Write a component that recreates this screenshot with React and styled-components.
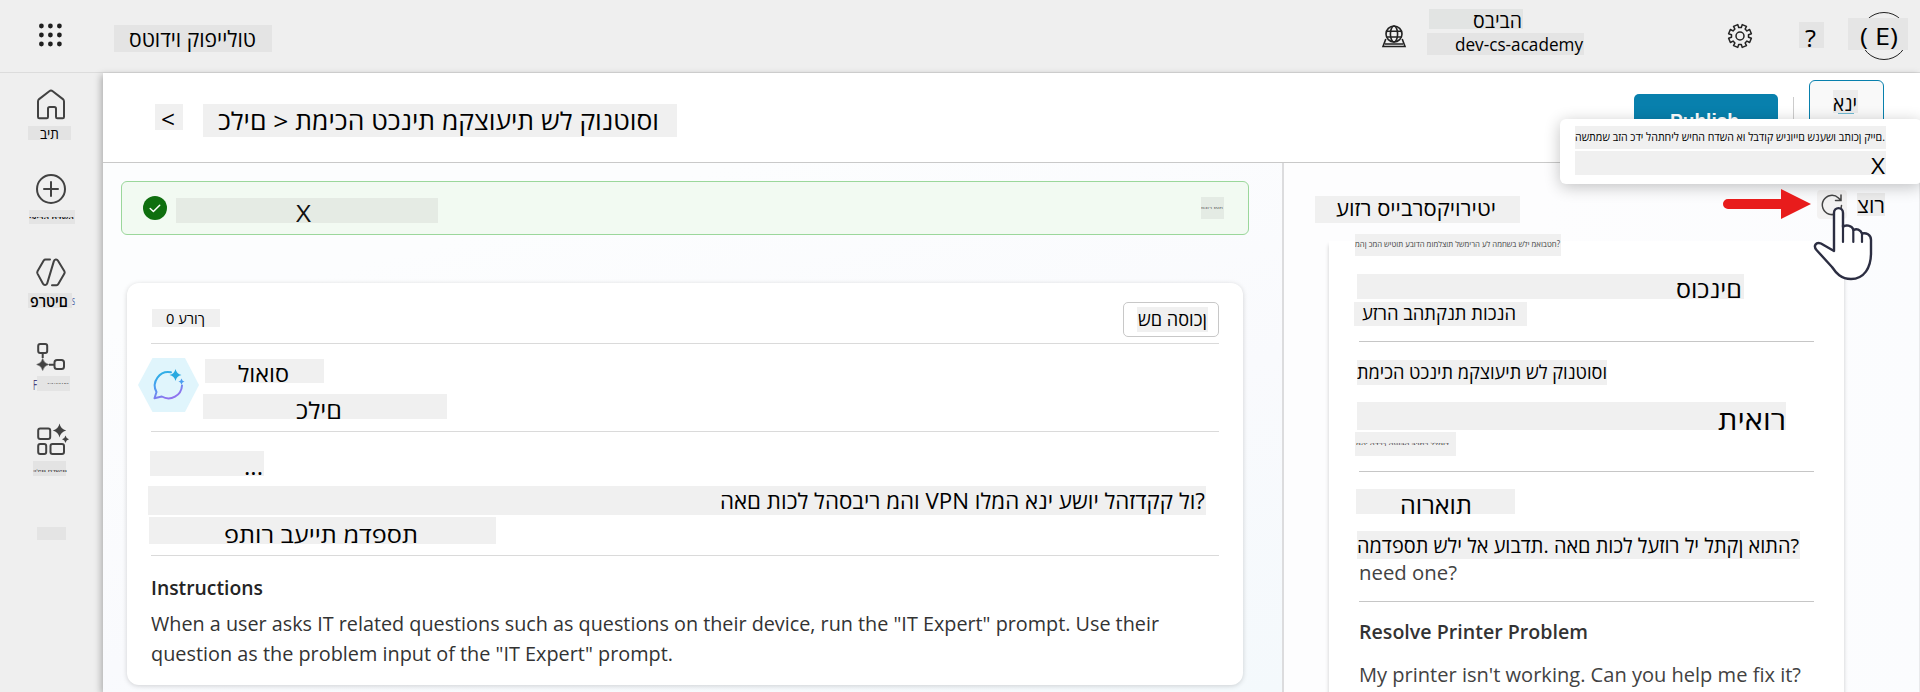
import React, { useLayoutEffect, useRef, useState } from "react";
import styled, { createGlobalStyle } from "styled-components";

const Global = createGlobalStyle`
  * { box-sizing: border-box; }
  body { margin: 0; overflow: hidden; background: #fff; font-family: "Open Sans", "Noto Sans", "Liberation Sans", sans-serif; color: #000; }
`;

/* ---------- text ---------- */
const FitText = styled.span`
  display: block;
  flex: none;
  white-space: pre;
  direction: ltr;
  unicode-bidi: bidi-override;
  transform-origin: 0 88.8%;
  font-size: ${(p) => p.$size}px;
  font-weight: ${(p) => p.$weight || 400};
  line-height: 1;
  color: ${(p) => p.$color || "#000"};
`;

/* Text stretched horizontally to a given width. */
function Fit({ width, size, weight, color, flat = 1, children }) {
  const ref = useRef(null);
  const [k, setK] = useState(1);
  useLayoutEffect(() => {
    const measure = () => ref.current && setK(width / ref.current.getBoundingClientRect().width * (Number(ref.current.dataset.k) || 1));
    measure();
  }, [width, size, children]);
  return (
    <FitText ref={ref} $size={size} $weight={weight} $color={color} data-k={k} style={{ transform: `scale(${k}, ${flat})` }}>
      {children}
    </FitText>
  );
}

const ChipBox = styled.div`
  flex: none;
  display: flex;
  align-items: flex-start;
  width: ${(p) => p.$w}px;
  height: ${(p) => p.$h}px;
  margin: ${(p) => p.$mt || 0}px 0 0 ${(p) => p.$ml || 0}px;
  background: ${(p) => p.$bg || "#f0f0f0"};
`;
const ChipInner = styled.div`
  flex: none;
  width: max-content;
  margin: ${(p) => p.$top}px 0 0 ${(p) => p.$x}px;
`;

function Chip({ w, h, mt, ml, bg, x = 0, base, tw, size, ...rest }) {
  return (
    <ChipBox $w={w} $h={h} $mt={mt} $ml={ml} $bg={bg}>
      {rest.children && (
        <ChipInner $x={x} $top={base - size * 0.888}>
          <Fit width={tw} size={size} {...rest} />
        </ChipInner>
      )}
    </ChipBox>
  );
}

/* ---------- frame ---------- */
const Page = styled.div`
  position: relative;
  width: 1920px;
  height: 692px;
  overflow: hidden;
  display: flex;
  flex-direction: column;
`;
const TopBar = styled.header`
  flex: none;
  display: flex;
  align-items: flex-start;
  height: 73px;
  background: #efefef;
  border-bottom: 1px solid #dcdcdc;
`;
const Body = styled.div`
  flex: 1;
  display: flex;
  min-height: 0;
`;
const Sidebar = styled.nav`
  flex: none;
  width: 103px;
  background: #efefef;
`;
const NavItem = styled.div`
  height: ${(p) => p.$h}px;
  padding-top: ${(p) => p.$pt}px;
`;
const NavRow = styled.div`
  display: flex;
  align-items: flex-start;
`;
const Main = styled.main`
  flex: 1;
  display: flex;
  flex-direction: column;
  min-width: 0;
  background: #fff;
  box-shadow: -2px 2px 7px rgba(0, 0, 0, 0.28);
`;
const MainHeader = styled.div`
  flex: none;
  display: flex;
  align-items: flex-start;
  height: 90px;
  border-bottom: 1px solid #c9c9c9;
`;
const Panes = styled.div`
  flex: 1;
  display: flex;
  min-height: 0;
`;
const ConfigPane = styled.section`
  flex: none;
  width: 1181px;
  border-right: 2px solid #dcdcde;
  padding: 18px 0 0 18px;
  background: linear-gradient(165deg, #fcfdfe 20%, #f9fafd 60%, #f4f9fc);
`;
const TestPane = styled.section`
  flex: 1;
  border-right: 1px solid #e9eaec;
  background: linear-gradient(90deg, #fdfdfe 40%, #fbfcfe);
`;

/* ---------- top bar ---------- */
const Icon = styled.svg`
  flex: none;
  display: block;
  overflow: visible;
  fill: none;
  margin: ${(p) => p.$mt || 0}px 0 0 ${(p) => p.$ml || 0}px;
`;
const Avatar = styled.div`
  display: flex;
  flex: none;
  width: 48px;
  height: 48px;
  margin: 12px 0 0 36px;
  border: 1.3px solid #222;
  border-radius: 50%;
`;

/* ---------- main header ---------- */
const PublishButton = styled.button`
  flex: none;
  display: flex;
  justify-content: center;
  width: 144px;
  height: 50px;
  margin: 21px 0 0 957px;
  padding: 17px 0 0 2px;
  border: 0;
  border-radius: 5px;
  background: #0880ad;
`;
const VLine = styled.div`
  width: 1px;
  height: 44px;
  margin: 24px 0 0 15px;
  background: #ccc;
`;
const TestButton = styled.div`
  flex: none;
  width: 75px;
  height: 50px;
  margin: 7px 0 0 15px;
  border: 1.5px solid #0880ad;
  border-radius: 6px;
  background: #f9f9f9;
`;
const Underline = styled.div`
  width: 16px;
  height: 1px;
  margin: 0 0 0 28px;
  background: #6fb9d2;
`;

/* ---------- left pane ---------- */
const Banner = styled.div`
  display: flex;
  align-items: flex-start;
  width: 1128px;
  height: 54px;
  border: 1px solid #9bd79b;
  border-radius: 6px;
  background: #f2faf2;
`;
const Card = styled.article`
  width: 1116px;
  height: 402px;
  margin: 48px 0 0 6px;
  border-radius: 12px;
  background: #fff;
  box-shadow: 0 1px 5px rgba(0, 0, 0, 0.17);
`;
const Row = styled.div`
  display: flex;
  align-items: flex-start;
  height: ${(p) => p.$h}px;
`;
const Rule = styled.div`
  width: ${(p) => p.$w}px;
  height: 1px;
  margin: ${(p) => p.$mt || 0}px 0 0 ${(p) => p.$ml}px;
  background: ${(p) => p.$c || "#dadada"};
`;
const SchemaButton = styled.div`
  flex: none;
  width: 96px;
  height: 35px;
  margin: 19px 0 0 903px;
  border: 1px solid #c8c8c8;
  border-radius: 5px;
`;
const Stack = styled.div`
  flex: none;
`;

/* ---------- right pane ---------- */
const TestHeader = styled.div`
  display: flex;
  align-items: flex-start;
  height: 78px;
`;
const RefreshButton = styled.div`
  flex: none;
  width: 30px;
  height: 29px;
  margin: 27px 0 0 297px;
  border-radius: 4px;
  background: #f3f2f2;
`;
const Chat = styled.div`
  display: flow-root;
  width: 515px;
  height: 460px;
  margin-left: 45px;
  background: linear-gradient(#fff, #fff) content-box;
  box-shadow: 0 4px 4px rgba(0, 0, 0, 0.2);
`;
const Pull = styled.div`
  margin-top: -7px;
`;

/* ---------- overlays ---------- */
const Tooltip = styled.div`
  position: absolute;
  left: 1560px;
  top: 119px;
  width: 362px;
  height: 65px;
  border-radius: 6px;
  background: #fff;
  box-shadow: 0 3px 16px rgba(0, 0, 0, 0.24);
`;
const Overlay = styled.svg`
  position: absolute;
  left: ${(p) => p.$x}px;
  top: ${(p) => p.$y}px;
`;

const INK = "#424242";

const gearPath = (() => {
  const pts = [];
  const n = 8;
  for (let i = 0; i < n; i++) {
    const a = (i * 2 * Math.PI) / n - Math.PI / 2 + Math.PI / 8;
    [
      [-0.24, 8.6],
      [-0.2, 11.6],
      [0.2, 11.6],
      [0.24, 8.6],
    ].forEach(([d, r]) => pts.push(`${(12 + r * Math.cos(a + d)).toFixed(2)} ${(12 + r * Math.sin(a + d)).toFixed(2)}`));
  }
  return `M${pts.join("L")}Z`;
})();

function Header() {
  return (
    <TopBar>
      <Icon width="24" height="24" $mt={23} $ml={38} viewBox="0 0 24 24">
        {[3, 12, 21].map((y) => [3, 12, 21].map((x) => <circle key={`${x}-${y}`} cx={x + 0.4} cy={y} r="2.4" fill="#202020" />))}
      </Icon>
      <Chip w={158} h={27} mt={25} ml={52} bg="#e4e4e4" x={15} base={22} tw={127} size={22} weight={480}>סטודיו קופיילוט</Chip>
      <Icon width="24" height="23" $mt={25} $ml={1110} viewBox="0 0 24 23" stroke="#222" strokeWidth="1.6">
        <circle cx="12" cy="9" r="8" />
        <ellipse cx="12" cy="9" rx="3.6" ry="8" />
        <path d="M4.500 6.200h15M4.500 12h15M3.800 14L1 21.500h22L20.200 14M3 19h18" />
      </Icon>
      <Stack>
        <Chip w={94} h={20} mt={9} ml={23} bg="#e2e4e3" x={44} base={20} tw={49} size={20} weight={480}>סביבה</Chip>
        <Chip w={157} h={22} mt={4} ml={21} bg="#e4e4e4" x={28} base={19} tw={128} size={19}>dev-cs-academy</Chip>
      </Stack>
      <Icon width="24" height="24" $mt={24} $ml={144} viewBox="0 0 24 24" stroke="#222" strokeWidth="1.5" strokeLinejoin="round">
        <path d={gearPath} />
        <circle cx="12" cy="12" r="4" />
      </Icon>
      <Chip w={25} h={26} mt={22} ml={47} bg="#e4e4e4" x={6} base={25} tw={11} size={23}>?</Chip>
      <Avatar>
        <Chip w={60} h={32} mt={5} ml={-13} bg="#e5e5e5" x={12} base={27} tw={38} size={23} weight={500}>( E)</Chip>
      </Avatar>
    </TopBar>
  );
}

function Nav() {
  return (
    <Sidebar>
      <NavItem $h={84} $pt={16}>
        <Icon width="30" height="31" $ml={36} viewBox="0 0 30 31" stroke={INK} strokeWidth="2" strokeLinejoin="round">
          <path d="M2 12.500c0-1 .4-1.800 1.100-2.400L13.300 2.200c1-.8 2.400-.8 3.400 0l10.200 7.900c.7.6 1.100 1.400 1.100 2.400V28c0 .8-.5 1.300-1.300 1.300h-5.400c-.8 0-1.300-.5-1.300-1.300v-8.200c0-1-.7-1.700-1.700-1.700h-4.600c-1 0-1.700.7-1.700 1.700V28c0 .8-.5 1.300-1.300 1.300H3.300C2.500 29.300 2 28.800 2 28z" />
        </Icon>
        <Chip w={43} h={14} mt={6} ml={28} bg="#e3e3e3" x={12} base={13.5} tw={19} size={13.5} weight={480}>בית</Chip>
      </NavItem>
      <NavItem $h={84} $pt={16}>
        <Icon width="30" height="32" $ml={36} viewBox="0 0 30 32" stroke={INK} strokeWidth="2" strokeLinecap="round">
          <circle cx="15" cy="16" r="14" />
          <path d="M15 9v14M8 16h14" />
        </Icon>
        <Chip w={46} h={14} mt={5} ml={29} bg="#e4e4e4" x={0} base={9} tw={45} size={11} flat={0.25} weight={600}>יצירה חדשה</Chip>
      </NavItem>
      <NavItem $h={85} $pt={17}>
        <Icon width="30" height="29" $ml={36} viewBox="0 0 30 29" stroke={INK} strokeWidth="2" strokeLinejoin="round" strokeLinecap="round">
          <path d="M14 1.500H9.500c-.8 0-1.400.4-1.800 1L1.500 13.200c-.4.8-.4 1.600 0 2.400l5.500 10.200c1 1.800 3.600 1.500 4.200-.4L17.800 3.400C18.500 1.200 21 1 22 2.700l6.400 10.500c.4.8.4 1.600 0 2.400L22.300 26c-.4.800-1 1.200-1.800 1.200H16" />
        </Icon>
        <NavRow>
          <Chip w={44} h={15} mt={6} ml={28} bg="#e3e3e3" x={2} base={14.5} tw={38} size={15.5} weight={550}>פרטים</Chip>
          <Chip w={3} h={15} mt={6} bg="transparent" base={13} tw={3} size={13} color="#3a55a0">s</Chip>
        </NavRow>
      </NavItem>
      <NavItem $h={82} $pt={16}>
        <Icon width="32" height="30" $ml={36} viewBox="0 0 32 30" stroke={INK} strokeWidth="2">
          <rect x="2.200" y="2" width="9" height="9" rx="2" />
          <rect x="18.500" y="18" width="9.500" height="9" rx="2.500" />
          <path d="M6.700 11v5M13 22.700h5" />
          <path d="M6.700 16.500q1.200 5 6 6-4.800 1-6 6-1.200-5-6-6 4.800-1 6-6z" fill={INK} strokeWidth=".5" />
        </Icon>
        <NavRow>
          <Chip w={4} h={15} mt={4} ml={33} bg="transparent" base={14} tw={4} size={15} color="#4a3f7a">F</Chip>
          <Chip w={33} h={15} mt={4} bg="#e4e4e4" x={10} base={8} tw={22} size={9} flat={0.2} color="#555">זרימות</Chip>
        </NavRow>
      </NavItem>
      <NavItem $h={118} $pt={15}>
        <Icon width="34" height="33" $ml={36} viewBox="0 0 34 33" stroke={INK} strokeWidth="2">
          <rect x="2.200" y="5.500" width="12" height="10.500" rx="2" />
          <rect x="2.200" y="21" width="8" height="10" rx="2" />
          <rect x="14.500" y="21" width="13.500" height="10" rx="2" />
          <path d="M23.500.5q1.200 5.700 6.700 7-5.500 1.300-6.700 7-1.200-5.700-6.700-7 5.500-1.300 6.700-7z" fill={INK} stroke="none" />
          <path d="M29.500 12.500q.6 3 3.500 3.700-2.900.7-3.500 3.700-.6-3-3.500-3.700 2.900-.7 3.500-3.700z" fill={INK} stroke="none" />
        </Icon>
        <Chip w={33} h={15} mt={5} ml={33} bg="#e3e3e3" x={0} base={10.500} tw={34} size={11} flat={0.35} color="#222">כלים חדשים</Chip>
      </NavItem>
      <Chip w={29} h={13} ml={37} mt={1} bg="#e4e4e4" />
    </Sidebar>
  );
}

function Config() {
  return (
    <ConfigPane>
      <Banner>
        <Icon width="24" height="24" $mt={14} $ml={21} viewBox="0 0 24 24">
          <circle cx="12" cy="12" r="12" fill="#0f6f0f" />
          <path d="M7.200 12.500l3.200 3 6.300-6.300" stroke="#fff" strokeWidth="1.500" strokeLinecap="round" strokeLinejoin="round" />
        </Icon>
        <Chip w={262} h={25} mt={16} ml={9} bg="#e5ebe4" x={120} base={24.500} tw={15} size={23} color="#111">X</Chip>
        <Chip w={23} h={22} mt={15} ml={763} bg="#e4ebe4" x={0} base={12} tw={22} size={10} flat={0.3} color="#555">סגור זאת</Chip>
      </Banner>
      <Card>
        <Row $h={60}>
          <Chip w={68} h={18} mt={26} ml={25} x={14} base={15} tw={39} size={14}>0 ערוך</Chip>
          <SchemaButton>
            <Chip w={71} h={25} mt={4} ml={13} x={1} base={19} tw={69} size={18} weight={450}>שם הסוכן</Chip>
          </SchemaButton>
        </Row>
        <Rule $w={1068} $ml={24} />
        <Row $h={87}>
          <Icon width="61" height="54" $mt={14} $ml={11} viewBox="0 0 61 54">
            <defs>
              <linearGradient id="bubble" x1="0" y1="0" x2="0.4" y2="1">
                <stop offset="0" stopColor="#27b5e3" />
                <stop offset="0.5" stopColor="#4a9df0" />
                <stop offset="1" stopColor="#8f74ee" />
              </linearGradient>
            </defs>
            <path d="M14.500 0h32.500l14 27-14 27h-32.500L0 27z" fill="#e0f5fc" />
            <path d="M33 14.300A13.500 13.500 0 0 0 18.500 34L16.500 40.200l7.300-1.700A13.500 13.500 0 0 0 44 27.500" stroke="url(#bubble)" strokeWidth="2" strokeLinecap="round" strokeLinejoin="round" />
            <path d="M37.500 11q1.100 4.900 6 6-4.900 1.100-6 6-1.100-4.900-6-6 4.900-1.100 6-6z" fill="#29a9e0" />
            <path d="M43.500 20.500q.6 2.500 3.100 3.100-2.500.6-3.100 3.100-.6-2.500-3.100-3.100 2.500-.6 3.100-3.100z" fill="#4a9df0" />
          </Icon>
          <Stack>
            <Chip w={119} h={24} mt={15} ml={6} x={33} base={22.500} tw={51} size={22} weight={480}>לואוס</Chip>
            <Chip w={244} h={25} mt={11} ml={4} x={93} base={25} tw={46} size={23} weight={480}>כלים</Chip>
          </Stack>
        </Row>
        <Rule $w={1068} $ml={24} />
        <Chip w={114} h={25} mt={19} ml={23} x={94} base={24} tw={19} size={24}>...</Chip>
        <Chip w={1058} h={29} mt={10} ml={21} x={572} base={23} tw={485} size={21.500} weight={450}>האם תוכל להסביר מהו VPN ולמה אני עשוי להזדקק לו?</Chip>
        <Chip w={347} h={27} mt={2} ml={22} x={75} base={25.500} tw={194} size={22} weight={480}>פתור בעיית מדפסת</Chip>
        <Rule $w={1068} $ml={24} $mt={11} />
        <Chip w={300} h={30} mt={20} ml={24} bg="transparent" base={19} tw={112} size={20.500} weight={600} color="#242424">Instructions</Chip>
        <Chip w={1060} h={30} mt={5} ml={24} bg="transparent" base={20} tw={1008} size={20.500} color="#333">When a user asks IT related questions such as questions on their device, run the "IT Expert" prompt. Use their</Chip>
        <Chip w={1060} h={30} ml={24} bg="transparent" base={20.500} tw={522} size={20.500} color="#333">question as the problem input of the "IT Expert" prompt.</Chip>
      </Card>
    </ConfigPane>
  );
}

function Test() {
  return (
    <TestPane>
      <TestHeader>
        <Chip w={205} h={27} mt={33} ml={31} x={21} base={21} tw={160} size={21} weight={480}>עוזר סייברסקיוריטי</Chip>
        <RefreshButton>
          <Icon width="22" height="22" $mt={4} $ml={4} viewBox="0 0 22 22" stroke="#444" strokeWidth="1.500" strokeLinecap="round">
            <path d="M20.500 11.500A9.600 9.600 0 1 1 17.500 4l2 2M20 1v5.500h-5.500" />
          </Icon>
        </RefreshButton>
        <Chip w={28} h={23} mt={30} ml={10} bg="#ededed" x={0} base={21} tw={28} size={21} weight={480}>צור</Chip>
      </TestHeader>
      <Chat>
        <Pull>
          <Chip w={206} h={22} ml={26} x={0} base={14} tw={205} size={13} flat={0.62} color="#444">מהן כמה שיטות עבודה מומלצות לשמירה על המחשב שלי מאובטח?</Chip>
        </Pull>
        <Chip w={387} h={25} mt={18} ml={28} x={319} base={24.500} tw={66} size={23} weight={480}>סוכנים</Chip>
        <Chip w={173} h={24} mt={3} ml={25} x={8} base={19} tw={154} size={19} weight={520}>עזרה בהתקנת תוכנה</Chip>
        <Rule $w={455} $ml={30} $mt={15} $c="#c6c6c6" />
        <Chip w={250} h={25} mt={18} ml={28} x={0} base={20} tw={250} size={19} weight={480}>תמיכה טכנית מקצועית של קונטוסו</Chip>
        <Chip w={429} h={28} mt={17} ml={28} x={361} base={28} tw={68} size={26} weight={450}>תיאור</Chip>
        <Chip w={101} h={24} mt={2} ml={26} x={1} base={13} tw={93} size={12} flat={0.2} color="#333">מהי הדרך הטובה ביותר ללמוד</Chip>
        <Rule $w={455} $ml={30} $mt={15} $c="#c6c6c6" />
        <Chip w={159} h={25} mt={17} ml={27} x={44} base={25} tw={72} size={24} weight={450}>הוראות</Chip>
        <Chip w={443} h={28} mt={17} ml={28} x={0} base={22} tw={442} size={20.500} weight={520}>המדפסת שלי לא עובדת. האם תוכל לעזור לי לתקן אותה?</Chip>
        <Chip w={300} h={30} ml={30} bg="transparent" base={21} tw={98} size={20.500} color="#424242">need one?</Chip>
        <Rule $w={455} $ml={30} $mt={12} $c="#c6c6c6" />
        <Chip w={400} h={30} mt={18} ml={30} bg="transparent" base={19} tw={229} size={20.500} weight={600} color="#333">Resolve Printer Problem</Chip>
        <Chip w={460} h={32} mt={13} ml={30} bg="transparent" base={19} tw={442} size={20.500} color="#424242">My printer isn't working. Can you help me fix it?</Chip>
      </Chat>
    </TestPane>
  );
}

export default function App() {
  return (
    <Page>
      <Global />
      <Header />
      <Body>
        <Nav />
        <Main>
          <MainHeader>
            <Chip w={28} h={26} mt={31} ml={52} x={6} base={24} tw={14} size={24}>{"<"}</Chip>
            <Chip w={474} h={33} mt={31} ml={20} x={15} base={26.500} tw={441} size={24.500} weight={450}>{"כלים > תמיכה טכנית מקצועית של קונטוסו"}</Chip>
            <PublishButton>
              <Fit width={69} size={20.500} weight={600} color="#fff">Publish</Fit>
            </PublishButton>
            <VLine />
            <TestButton>
              <Chip w={25} h={23} mt={8.500} ml={22.500} bg="#ececec" x={0} base={22.500} tw={24} size={21} weight={450}>אני</Chip>
              <Underline />
            </TestButton>
          </MainHeader>
          <Panes>
            <Config />
            <Test />
          </Panes>
        </Main>
      </Body>
      <Tooltip>
        <Chip w={311} h={23} mt={7} ml={15} x={0} base={15.500} tw={310} size={11.500} weight={450}>השתמש בזה כדי להתחיל שיחה חדשה או לבדוק שינויים שנעשו בתוכן קיים.</Chip>
        <Chip w={311} h={24} mt={2} ml={15} x={296} base={23} tw={14} size={22}>X</Chip>
      </Tooltip>
      <Overlay $x={1722} $y={188} width="90" height="32" viewBox="0 0 90 32">
        <path d="M6 11H59V1L89 16 59 31V21H6a5 5 0 0 1 0-10z" fill="#e81c1c" />
      </Overlay>
      <Overlay $x={1812} $y={205} width="62" height="76" viewBox="0 0 62 76">
        <path
          d="M22 46V8c0-6.500 9-6.500 9 0v14c2-2.500 9-2 10.500 3 3-1.500 7-.5 8.500 3.500 4-1 9 1 9 6.500V48c0 15-7 26-20 26C29 74 24 68 20 62L4.500 45C1 41 4 36.500 9 38.500z"
          fill="#fff" stroke="#2c2e42" strokeWidth="2.400" strokeLinejoin="round"
        />
        <path d="M31 20v17M41.300 25v12M50 28.500V37" fill="none" stroke="#2c2e42" strokeWidth="2.200" strokeLinecap="round" />
      </Overlay>
    </Page>
  );
}
